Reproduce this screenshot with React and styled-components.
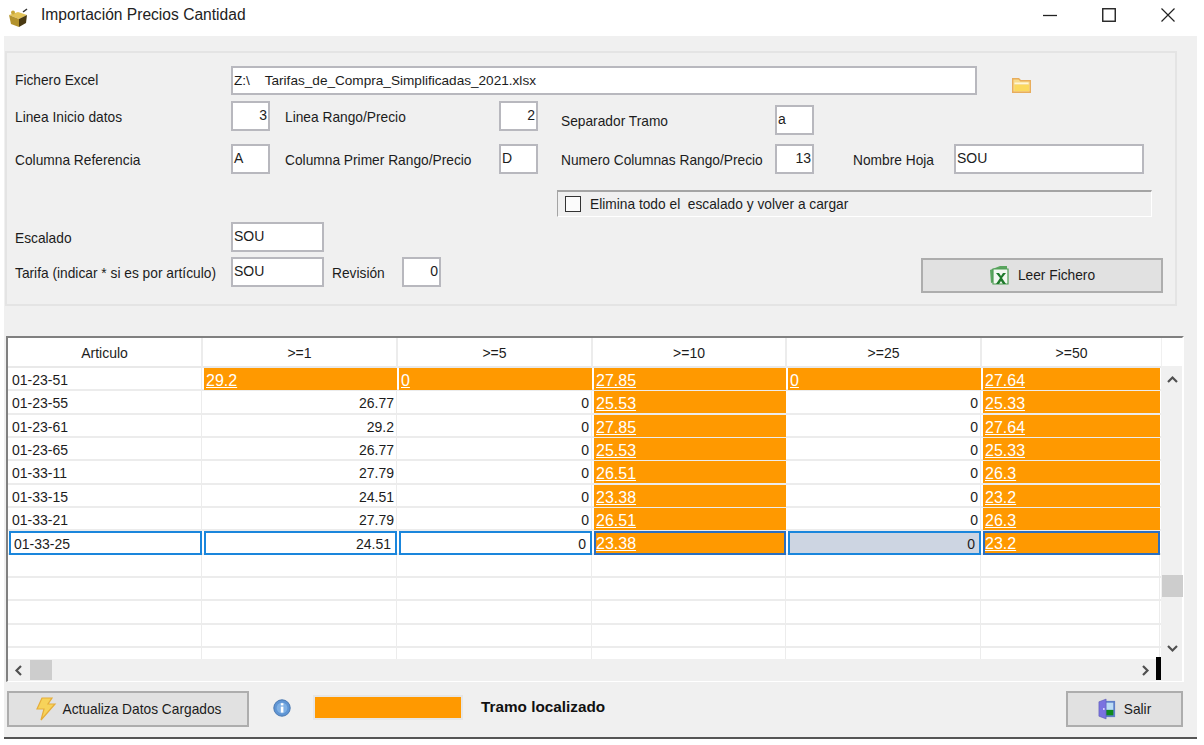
import styled, { createGlobalStyle } from "styled-components";

const GlobalStyle = createGlobalStyle`
  html, body {
    margin: 0;
    padding: 0;
    background: #fff;
  }
  body {
    font-family: "Liberation Sans", Arial, sans-serif;
    font-size: 14px;
    color: #1c1c1c;
  }
`;

const Window = styled.div`
  width: 1204px;
  height: 745px;
  display: flex;
  flex-direction: column;
  overflow: hidden;
`;

const TitleBar = styled.div`
  height: 36px;
  flex: none;
  display: flex;
  align-items: center;
  padding: 0 29px 0 8px;
  box-sizing: border-box;
  background: #fff;
`;

const TitleText = styled.div`
  margin-left: 13px;
  margin-bottom: 7px;
  font-size: 15.6px;
  color: #222;
`;

const WindowButton = styled.div`
  display: flex;
  align-items: center;
  margin-left: ${(p) => p.$gap};
  margin-bottom: 6px;
`;

const Body = styled.div`
  width: 1193px;
  height: 703px;
  flex: none;
  margin-left: 4px;
  padding-left: 1px;
  box-sizing: border-box;
  display: flex;
  flex-direction: column;
  background: #f0f0f0;
  border-bottom: 2px solid #555;
`;

const Panel = styled.div`
  width: 1172px;
  height: 255px;
  margin-top: 15px;
  flex: none;
  padding: 13px 0 0 8px;
  box-sizing: border-box;
  border: 2px solid #e4e4e4;
  display: flex;
  flex-direction: column;
`;

const Row = styled.div`
  display: flex;
  align-items: flex-start;
  margin-top: ${(p) => p.$top || 0}px;
`;

const Label = styled.div`
  width: ${(p) => p.$w}px;
  margin-left: ${(p) => p.$ml || 0}px;
  height: ${(p) => p.$h || 30}px;
  line-height: ${(p) => p.$h || 34}px;
  flex: none;
  font-size: 13.75px;
  white-space: nowrap;
  margin-top: ${(p) => p.$down || 0}px;
`;

const TextBox = styled.div`
  width: ${(p) => p.$w}px;
  height: ${(p) => p.$h || 30}px;
  flex: none;
  box-sizing: border-box;
  margin-top: ${(p) => p.$down || 0}px;
  padding: 0 1px;
  border: 2px solid #b8b8be;
  background: #fff;
  font-size: ${(p) => p.$size || 14}px;
  text-align: ${(p) => (p.$right ? "right" : "left")};
  line-height: 25px;
  white-space: pre;
  overflow: hidden;
`;

const FolderSlot = styled.div`
  margin: 12px 0 0 35px;
  display: flex;
`;

const CheckGroup = styled.div`
  width: 595px;
  height: 27px;
  margin-left: 542px;
  box-sizing: border-box;
  display: flex;
  align-items: center;
  padding-left: 7px;
  border-top: 2px solid #a4a4a4;
  border-left: 1px solid #a4a4a4;
  border-right: 1px solid #fff;
  border-bottom: 1px solid #fff;
`;

const CheckBox = styled.div`
  width: 16px;
  height: 16px;
  box-sizing: border-box;
  border: 1.5px solid #333;
  background: #fbfbfb;
`;

const CheckText = styled.div`
  margin-left: 9px;
  font-size: 13.75px;
  white-space: pre;
`;

const LowerRow = styled.div`
  display: flex;
  align-items: flex-start;
  margin-top: 5px;
`;

const LowerFields = styled.div`
  display: flex;
  flex-direction: column;
  gap: 5px;
`;

const Button = styled.div`
  width: ${(p) => p.$w}px;
  height: ${(p) => p.$h}px;
  margin-left: ${(p) => p.$ml || "0"};
  margin-top: ${(p) => p.$down || 0}px;
  flex: none;
  box-sizing: border-box;
  display: flex;
  align-items: center;
  justify-content: center;
  gap: ${(p) => p.$gap || 8}px;
  font-size: 13.75px;
  background: #e1e1e1;
  border: 2px solid #adadad;
`;

const GridFrame = styled.div`
  width: 1178px;
  height: 346px;
  margin: 30px 0 0 1px;
  flex: none;
  box-sizing: border-box;
  display: flex;
  flex-direction: column;
  border-top: 2px solid #808080;
  border-left: 2px solid #808080;
  border-right: 2px solid #fff;
  border-bottom: 1px solid #fff;
  background: #f0f0f0;
`;

const GridMain = styled.div`
  display: flex;
  height: 321px;
  flex: none;
`;

const Table = styled.div`
  width: 1153px;
  height: 321px;
  flex: none;
  overflow: hidden;
  background: #fff;
`;

const columns = "195px 195px 195px 194px 195px 179px";

const HeadRow = styled.div`
  display: grid;
  grid-template-columns: ${columns};
  height: 30px;
  box-sizing: border-box;
  border-bottom: 2px solid #e9e9e9;
`;

const HeadCell = styled.div`
  text-align: center;
  line-height: 30px;
  border-right: 2px solid #ececec;

  &:last-child {
    border-right: none;
  }
`;

const DataRow = styled.div`
  display: grid;
  grid-template-columns: ${columns};
  height: 23.33px;
  box-sizing: border-box;
  border-bottom: 2px solid #ececec;
`;

const Cell = styled.div`
  height: 23.33px;
  line-height: 25px;
  box-sizing: border-box;
  padding: 0 2px 0 4px;
  margin-right: 1px;
  text-align: ${(p) => (p.$num ? "right" : "left")};
  border-right: 1px solid #ececec;
  white-space: nowrap;

  ${(p) =>
    p.$hit &&
    `
    background: #ff9900;
    color: #fff;
    font-size: 16px;
    line-height: 26px;
    text-decoration: underline;
    text-align: left;
    border-right: none;
    margin-left: 1px;
    padding-left: 2px;
    height: 22px;
  `}

  ${(p) =>
    p.$active &&
    `
    height: 24px;
    line-height: 22px;
    margin-left: 1px;
    padding-left: ${p.$hit ? 0 : 3}px;
    padding-right: 4px;
    border: 2px solid ${p.$hit ? "#2a6fc0" : "#1a86dc"};
  `}

  ${(p) => p.$current && `background: #cdd5e2;`}
`;

const VScroll = styled.div`
  width: 21px;
  margin-left: 1px;
  flex: none;
  display: flex;
  flex-direction: column;
  align-items: center;
`;

const Corner = styled.div`
  width: 100%;
  height: 28px;
  flex: none;
  background: #fff;
`;

const ArrowSlot = styled.div`
  height: 22px;
  flex: none;
  display: flex;
  align-items: center;
  justify-content: center;
  margin-top: ${(p) => p.$top || "0"};
`;

const ThumbV = styled.div`
  width: 100%;
  height: 22px;
  flex: none;
  margin-top: 184px;
  background: #cdcdcd;
`;

const HScroll = styled.div`
  height: 22px;
  flex: none;
  display: flex;
  align-items: center;
  width: 1153px;
`;

const HArrow = styled.div`
  width: 22px;
  height: 20px;
  flex: none;
  display: flex;
  align-items: center;
  justify-content: center;
  margin-left: ${(p) => p.$ml || "0"};
`;

const ThumbH = styled.div`
  width: 22px;
  height: 20px;
  background: #cdcdcd;
`;

const BlackMark = styled.div`
  width: 5px;
  height: 23px;
  margin: -3px 0 0 0;
  background: #000;
`;

const Footer = styled.div`
  display: flex;
  align-items: flex-start;
  margin-top: 9px;
  padding-left: 2px;
  width: 1178px;
  box-sizing: border-box;
`;

const InfoSlot = styled.div`
  margin: 8px 0 0 24px;
  display: flex;
`;

const Swatch = styled.div`
  width: 150px;
  height: 25px;
  margin: 4px 0 0 22px;
  box-sizing: border-box;
  background: #ff9900;
  border: 2px solid #e6e6e6;
`;

const Legend = styled.div`
  margin: 8px 0 0 18px;
  font-weight: bold;
  font-size: 15.3px;
  line-height: 16px;
  color: #111;
`;

const BoxIcon = () => (
  <svg width="20" height="20" viewBox="0 0 20 20">
    <path d="M1 7l9-3 9 3-8 4z" fill="#e2c255" />
    <path d="M1 7l10 4v8l-8-3z" fill="#b3922c" />
    <path d="M11 11l8-4-1 8-7 4z" fill="#4a3a12" />
    <circle cx="5" cy="4.5" r="2" fill="#c8a838" />
    <path d="M15 4l4-3" stroke="#333" strokeWidth="1.5" />
  </svg>
);

const FolderIcon = () => (
  <svg width="19" height="15" viewBox="0 0 19 15">
    <path d="M0.7 0.7h6l2 2h9.600v11.600H0.700z" fill="#f8dc8c" stroke="#e8ad5c" strokeWidth="1.4" />
    <path d="M2.500 7h14.500v6H2.500z" fill="#fbd95e" />
    <path d="M2.500 4.500h14v1.600H2.500z" fill="#fff6d8" />
  </svg>
);

const ExcelIcon = () => (
  <svg width="21" height="22" viewBox="0 0 21 22">
    <path d="M1 5l10-4h7v3H5v13l-3 1z" fill="#5aa55f" />
    <path d="M4 4h15v15H4z" fill="#f3f8f2" stroke="#4f9d55" strokeWidth="1.2" />
    <path d="M7 8h3l2 3 2-3h3l-4 5 4 6h-3l-2-3-2 3H7l4-6z" fill="#1f7a2c" />
  </svg>
);

const BoltIcon = () => (
  <svg width="22" height="24" viewBox="0 0 22 24">
    <path d="M7 1h10l-4 6h7L6 23l3-11H2z" fill="#f7d35a" stroke="#e6ad3a" strokeWidth="1.2" />
  </svg>
);

const InfoIcon = () => (
  <svg width="18" height="18" viewBox="0 0 18 18">
    <circle cx="9" cy="9" r="8.2" fill="#5f95d4" stroke="#4a78b0" />
    <circle cx="9" cy="9" r="5.4" fill="#7fb0e4" />
    <rect x="7.8" y="7.6" width="2.6" height="6" fill="#fff" />
    <rect x="7.8" y="4.2" width="2.6" height="2.2" fill="#fff" />
  </svg>
);

const DoorIcon = () => (
  <svg width="18" height="22" viewBox="0 0 20 24">
    <path d="M7 3h12v18H7z" fill="#5f7fc8" />
    <path d="M9 5h8v8H9z" fill="#bcdcf5" />
    <path d="M9 13h8v6H9z" fill="#0f8a1e" />
    <path d="M1 4l8-3v22l-8-3z" fill="#7a72e0" stroke="#5a5ab0" strokeWidth="0.6" />
    <circle cx="6.5" cy="12" r="1" fill="#e6e6ff" />
  </svg>
);

const Minimize = () => (
  <svg width="14" height="14" viewBox="0 0 14 14">
    <path d="M0 7.500h14" stroke="#222" strokeWidth="1.3" />
  </svg>
);

const Maximize = () => (
  <svg width="14" height="14" viewBox="0 0 14 14">
    <rect x="0.75" y="0.75" width="12.5" height="12.5" fill="none" stroke="#222" strokeWidth="1.4" />
  </svg>
);

const Close = () => (
  <svg width="14" height="14" viewBox="0 0 14 14">
    <path d="M0.500 0.500l13 13M13.500 0.500l-13 13" stroke="#222" strokeWidth="1.2" />
  </svg>
);

const Chevron = ({ dir }) => {
  const d = {
    up: "M1 7l4.500-4.500L10 7",
    down: "M1 3l4.500 4.500L10 3",
    left: "M7 1L2.500 5.500 7 10",
    right: "M3 1l4.500 4.500L3 10",
  }[dir];
  return (
    <svg width="11" height="11" viewBox="0 0 11 11">
      <path d={d} fill="none" stroke="#505050" strokeWidth="2.2" />
    </svg>
  );
};

const headers = ["Articulo", ">=1", ">=5", ">=10", ">=25", ">=50"];

const rows = [
  ["01-23-51", "29.2", "0", "27.85", "0", "27.64"],
  ["01-23-55", "26.77", "0", "25.53", "0", "25.33"],
  ["01-23-61", "29.2", "0", "27.85", "0", "27.64"],
  ["01-23-65", "26.77", "0", "25.53", "0", "25.33"],
  ["01-33-11", "27.79", "0", "26.51", "0", "26.3"],
  ["01-33-15", "24.51", "0", "23.38", "0", "23.2"],
  ["01-33-21", "27.79", "0", "26.51", "0", "26.3"],
  ["01-33-25", "24.51", "0", "23.38", "0", "23.2"],
];

const emptyRows = [0, 1, 2, 3, 4];
const emptyCells = [0, 1, 2, 3, 4, 5];

function isHit(rowIndex, colIndex) {
  if (colIndex === 3 || colIndex === 5) return true;
  return rowIndex === 0 && colIndex > 0;
}

export default function App() {
  return (
    <Window>
      <GlobalStyle />
      <TitleBar>
        <BoxIcon />
        <TitleText>Importación Precios Cantidad</TitleText>
        <WindowButton $gap="auto">
          <Minimize />
        </WindowButton>
        <WindowButton $gap="45px">
          <Maximize />
        </WindowButton>
        <WindowButton $gap="45px">
          <Close />
        </WindowButton>
      </TitleBar>
      <Body>
        <Panel>
          <Row>
            <Label $w={216} $h={29}>
              Fichero Excel
            </Label>
            <TextBox $w={746} $h={29} $size={13.6}>
              {"Z:\\    Tarifas_de_Compra_Simplificadas_2021.xlsx"}
            </TextBox>
            <FolderSlot>
              <FolderIcon />
            </FolderSlot>
          </Row>
          <Row $top={6}>
            <Label $w={216}>Linea Inicio datos</Label>
            <TextBox $w={39} $right>
              3
            </TextBox>
            <Label $w={214} $ml={15}>
              Linea Rango/Precio
            </Label>
            <TextBox $w={39} $right>
              2
            </TextBox>
            <Label $w={214} $ml={23} $down={4}>
              Separador Tramo
            </Label>
            <TextBox $w={39} $down={4}>
              a
            </TextBox>
          </Row>
          <Row $top={9}>
            <Label $w={216}>Columna Referencia</Label>
            <TextBox $w={39}>A</TextBox>
            <Label $w={214} $ml={15}>
              Columna Primer Rango/Precio
            </Label>
            <TextBox $w={39}>D</TextBox>
            <Label $w={214} $ml={23}>
              Numero Columnas Rango/Precio
            </Label>
            <TextBox $w={39} $right>
              13
            </TextBox>
            <Label $w={101} $ml={39}>
              Nombre Hoja
            </Label>
            <TextBox $w={190}>SOU</TextBox>
          </Row>
          <Row $top={16}>
            <CheckGroup>
              <CheckBox />
              <CheckText>Elimina todo el  escalado y volver a cargar</CheckText>
            </CheckGroup>
          </Row>
          <LowerRow>
            <LowerFields>
              <Row>
                <Label $w={216}>Escalado</Label>
                <TextBox $w={93}>SOU</TextBox>
              </Row>
              <Row>
                <Label $w={216}>Tarifa (indicar * si es por artículo)</Label>
                <TextBox $w={93}>SOU</TextBox>
                <Label $w={70} $ml={8}>
                  Revisión
                </Label>
                <TextBox $w={39} $right>
                  0
                </TextBox>
              </Row>
            </LowerFields>
            <Button $w={242} $h={35} $ml="480px" $down={36}>
              <ExcelIcon />
              Leer Fichero
            </Button>
          </LowerRow>
        </Panel>
        <GridFrame>
          <GridMain>
            <Table>
              <HeadRow>
                {headers.map((h) => (
                  <HeadCell key={h}>{h}</HeadCell>
                ))}
              </HeadRow>
              {rows.map((row, r) => (
                <DataRow key={row[0]}>
                  {row.map((value, c) => (
                    <Cell
                      key={c}
                      $num={c > 0}
                      $hit={isHit(r, c)}
                      $active={r === 7}
                      $current={r === 7 && c === 4}
                    >
                      {value}
                    </Cell>
                  ))}
                </DataRow>
              ))}
              {emptyRows.map((r) => (
                <DataRow key={r}>
                  {emptyCells.map((c) => (
                    <Cell key={c} />
                  ))}
                </DataRow>
              ))}
            </Table>
            <VScroll>
              <Corner />
              <ArrowSlot $top="3px">
                <Chevron dir="up" />
              </ArrowSlot>
              <ThumbV />
              <ArrowSlot $top="auto">
                <Chevron dir="down" />
              </ArrowSlot>
            </VScroll>
          </GridMain>
          <HScroll>
            <HArrow>
              <Chevron dir="left" />
            </HArrow>
            <ThumbH />
            <HArrow $ml="auto">
              <Chevron dir="right" />
            </HArrow>
            <BlackMark />
          </HScroll>
        </GridFrame>
        <Footer>
          <Button $w={242} $h={36} $gap={6}>
            <BoltIcon />
            Actualiza Datos Cargados
          </Button>
          <InfoSlot>
            <InfoIcon />
          </InfoSlot>
          <Swatch />
          <Legend>Tramo localizado</Legend>
          <Button $w={117} $h={36} $ml="auto">
            <DoorIcon />
            Salir
          </Button>
        </Footer>
      </Body>
    </Window>
  );
}
